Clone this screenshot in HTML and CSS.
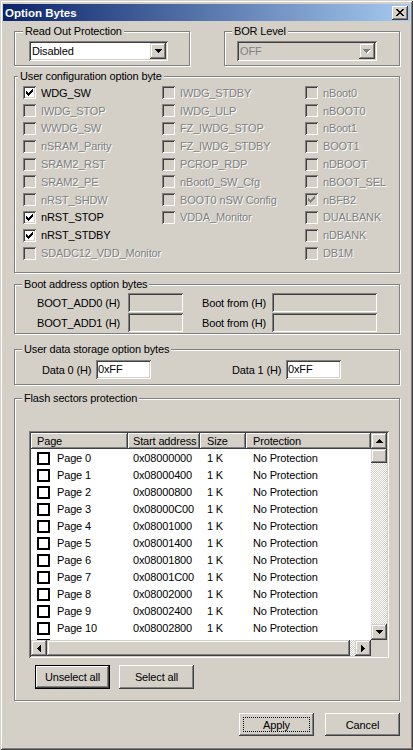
FILE: index.html
```html
<!DOCTYPE html>
<html>
<head>
<meta charset="utf-8">
<title>Option Bytes</title>
<link rel="stylesheet" href="styles.css">
</head>
<body>
<div class="window">
  <div class="titlebar">
    <span class="title">Option Bytes</span>
    <span class="close"><svg width="8" height="7" viewBox="0 0 8 7" shape-rendering="crispEdges"><path d="M0 0h2v1H0z M6 0h2v1H6z M1 1h2v1H1z M5 1h2v1H5z M2 2h4v1H2z M3 3h2v1H3z M2 4h4v1H2z M1 5h2v1H1z M5 5h2v1H5z M0 6h2v1H0z M6 6h2v1H6z" fill="#000"/></svg></span>
  </div>
  <div class="client">
    <div class="toprow">
      <div class="group g-rop">
        <span class="glabel gl-rop">Read Out Protection</span>
        <div class="combo">
          <span class="combo-text">Disabled</span>
          <span class="sbtn"><svg width="7" height="4" viewBox="0 0 7 4" shape-rendering="crispEdges"><path d="M0 0h7v1H0z M1 1h5v1H1z M2 2h3v1H2z M3 3h1v1H3z" fill="#000"/></svg></span>
        </div>
      </div>
      <div class="group g-bor">
        <span class="glabel">BOR Level</span>
        <div class="combo combo-dis">
          <span class="combo-text">OFF</span>
          <span class="sbtn"><svg width="8" height="5" viewBox="0 0 8 5" shape-rendering="crispEdges"><path d="M1 1h7v1H1z M2 2h5v1H2z M3 3h3v1H3z M4 4h1v1H4z" fill="#fff"/><path d="M0 0h7v1H0z M1 1h5v1H1z M2 2h3v1H2z M3 3h1v1H3z" fill="#808080"/></svg></span>
        </div>
      </div>
    </div>

    <div class="group g-user">
      <span class="glabel gl-user">User configuration option byte</span>
      <div class="cbcols">
        <div class="cbcol col1">
          <div class="cb"><span class="box"><svg class="chk" width="7" height="7" viewBox="0 0 7 7" shape-rendering="crispEdges"><path d="M6 0h1v1H6z M5 1h2v1H5z M0 2h1v1H0z M4 2h3v1H4z M0 3h2v1H0z M3 3h3v1H3z M0 4h5v1H0z M1 5h3v1H1z M2 6h1v1H2z"/></svg></span><span class="lbl">WDG_SW</span></div>
          <div class="cb dis"><span class="box"></span><span class="lbl">IWDG_STOP</span></div>
          <div class="cb dis"><span class="box"></span><span class="lbl">WWDG_SW</span></div>
          <div class="cb dis"><span class="box"></span><span class="lbl">nSRAM_Parity</span></div>
          <div class="cb dis"><span class="box"></span><span class="lbl">SRAM2_RST</span></div>
          <div class="cb dis"><span class="box"></span><span class="lbl">SRAM2_PE</span></div>
          <div class="cb dis"><span class="box"></span><span class="lbl">nRST_SHDW</span></div>
          <div class="cb"><span class="box"><svg class="chk" width="7" height="7" viewBox="0 0 7 7" shape-rendering="crispEdges"><path d="M6 0h1v1H6z M5 1h2v1H5z M0 2h1v1H0z M4 2h3v1H4z M0 3h2v1H0z M3 3h3v1H3z M0 4h5v1H0z M1 5h3v1H1z M2 6h1v1H2z"/></svg></span><span class="lbl">nRST_STOP</span></div>
          <div class="cb"><span class="box"><svg class="chk" width="7" height="7" viewBox="0 0 7 7" shape-rendering="crispEdges"><path d="M6 0h1v1H6z M5 1h2v1H5z M0 2h1v1H0z M4 2h3v1H4z M0 3h2v1H0z M3 3h3v1H3z M0 4h5v1H0z M1 5h3v1H1z M2 6h1v1H2z"/></svg></span><span class="lbl">nRST_STDBY</span></div>
          <div class="cb dis"><span class="box"></span><span class="lbl">SDADC12_VDD_Monitor</span></div>
        </div>
        <div class="cbcol col2">
          <div class="cb dis"><span class="box"></span><span class="lbl">IWDG_STDBY</span></div>
          <div class="cb dis"><span class="box"></span><span class="lbl">IWDG_ULP</span></div>
          <div class="cb dis"><span class="box"></span><span class="lbl">FZ_IWDG_STOP</span></div>
          <div class="cb dis"><span class="box"></span><span class="lbl">FZ_IWDG_STDBY</span></div>
          <div class="cb dis"><span class="box"></span><span class="lbl">PCROP_RDP</span></div>
          <div class="cb dis"><span class="box"></span><span class="lbl">nBoot0_SW_Cfg</span></div>
          <div class="cb dis"><span class="box"></span><span class="lbl">BOOT0 nSW Config</span></div>
          <div class="cb dis"><span class="box"></span><span class="lbl">VDDA_Monitor</span></div>
        </div>
        <div class="cbcol col3">
          <div class="cb dis"><span class="box"></span><span class="lbl">nBoot0</span></div>
          <div class="cb dis"><span class="box"></span><span class="lbl">nBOOT0</span></div>
          <div class="cb dis"><span class="box"></span><span class="lbl">nBoot1</span></div>
          <div class="cb dis"><span class="box"></span><span class="lbl">BOOT1</span></div>
          <div class="cb dis"><span class="box"></span><span class="lbl">nDBOOT</span></div>
          <div class="cb dis"><span class="box"></span><span class="lbl">nBOOT_SEL</span></div>
          <div class="cb dis"><span class="box"><svg class="chk" width="7" height="7" viewBox="0 0 7 7" shape-rendering="crispEdges"><path d="M6 0h1v1H6z M5 1h2v1H5z M0 2h1v1H0z M4 2h3v1H4z M0 3h2v1H0z M3 3h3v1H3z M0 4h5v1H0z M1 5h3v1H1z M2 6h1v1H2z"/></svg></span><span class="lbl">nBFB2</span></div>
          <div class="cb dis"><span class="box"></span><span class="lbl">DUALBANK</span></div>
          <div class="cb dis"><span class="box"></span><span class="lbl">nDBANK</span></div>
          <div class="cb dis"><span class="box"></span><span class="lbl">DB1M</span></div>
        </div>
      </div>
    </div>

    <div class="group g-boot">
      <span class="glabel">Boot address option bytes</span>
      <div class="frow">
        <span class="flbl w91">BOOT_ADD0 (H)</span><span class="edit dis w55"></span>
        <span class="flbl w70 ml19">Boot from (H)</span><span class="edit dis w105"></span>
      </div>
      <div class="frow">
        <span class="flbl w91">BOOT_ADD1 (H)</span><span class="edit dis w55"></span>
        <span class="flbl w70 ml19">Boot from (H)</span><span class="edit dis w105"></span>
      </div>
    </div>

    <div class="group g-data">
      <span class="glabel">User data storage option bytes</span>
      <div class="frow">
        <span class="flbl w54">Data 0 (H)</span><span class="edit w55">0xFF</span>
        <span class="flbl w54 ml81">Data 1 (H)</span><span class="edit w55">0xFF</span>
      </div>
    </div>

    <div class="group g-flash">
      <span class="glabel">Flash sectors protection</span>
      <div class="list">
        <div class="lv-main">
          <div class="lv-head">
            <div class="hc c1">Page</div>
            <div class="hc c2">Start address</div>
            <div class="hc c3">Size</div>
            <div class="hc c4">Protection</div>
          </div>
          <div class="lv-row"><div class="c1"><span class="rbox"></span>Page 0</div><div class="c2">0x08000000</div><div class="c3">1 K</div><div class="c4">No Protection</div></div>
          <div class="lv-row"><div class="c1"><span class="rbox"></span>Page 1</div><div class="c2">0x08000400</div><div class="c3">1 K</div><div class="c4">No Protection</div></div>
          <div class="lv-row"><div class="c1"><span class="rbox"></span>Page 2</div><div class="c2">0x08000800</div><div class="c3">1 K</div><div class="c4">No Protection</div></div>
          <div class="lv-row"><div class="c1"><span class="rbox"></span>Page 3</div><div class="c2">0x08000C00</div><div class="c3">1 K</div><div class="c4">No Protection</div></div>
          <div class="lv-row"><div class="c1"><span class="rbox"></span>Page 4</div><div class="c2">0x08001000</div><div class="c3">1 K</div><div class="c4">No Protection</div></div>
          <div class="lv-row"><div class="c1"><span class="rbox"></span>Page 5</div><div class="c2">0x08001400</div><div class="c3">1 K</div><div class="c4">No Protection</div></div>
          <div class="lv-row"><div class="c1"><span class="rbox"></span>Page 6</div><div class="c2">0x08001800</div><div class="c3">1 K</div><div class="c4">No Protection</div></div>
          <div class="lv-row"><div class="c1"><span class="rbox"></span>Page 7</div><div class="c2">0x08001C00</div><div class="c3">1 K</div><div class="c4">No Protection</div></div>
          <div class="lv-row"><div class="c1"><span class="rbox"></span>Page 8</div><div class="c2">0x08002000</div><div class="c3">1 K</div><div class="c4">No Protection</div></div>
          <div class="lv-row"><div class="c1"><span class="rbox"></span>Page 9</div><div class="c2">0x08002400</div><div class="c3">1 K</div><div class="c4">No Protection</div></div>
          <div class="lv-row"><div class="c1"><span class="rbox"></span>Page 10</div><div class="c2">0x08002800</div><div class="c3">1 K</div><div class="c4">No Protection</div></div>
          <div class="lv-row"><div class="c1"><span class="rbox"></span>Page 11</div><div class="c2">0x08002C00</div><div class="c3">1 K</div><div class="c4">No Protection</div></div>
        </div>
        <div class="vscroll">
          <span class="sbtn"><svg width="7" height="4" viewBox="0 0 7 4" shape-rendering="crispEdges"><path d="M3 0h1v1H3z M2 1h3v1H2z M1 2h5v1H1z M0 3h7v1H0z" fill="#000"/></svg></span>
          <span class="sthumb vthumb"></span>
          <span class="strack"></span>
          <span class="sbtn"><svg width="7" height="4" viewBox="0 0 7 4" shape-rendering="crispEdges"><path d="M0 0h7v1H0z M1 1h5v1H1z M2 2h3v1H2z M3 3h1v1H3z" fill="#000"/></svg></span>
        </div>
        <div class="hscroll">
          <span class="sbtn"><svg width="4" height="7" viewBox="0 0 4 7" shape-rendering="crispEdges"><path d="M3 0h1v7H3z M2 1h1v5H2z M1 2h1v3H1z M0 3h1v1H0z" fill="#000"/></svg></span>
          <span class="sthumb hthumb"></span>
          <span class="strack"></span>
          <span class="sbtn"><svg width="4" height="7" viewBox="0 0 4 7" shape-rendering="crispEdges"><path d="M0 0h1v7H0z M1 1h1v5H1z M2 2h1v3H2z M3 3h1v1H3z" fill="#000"/></svg></span>
        </div>
        <div class="corner"></div>
      </div>
      <div class="lbtns">
        <span class="btn default">Unselect all</span>
        <span class="btn">Select all</span>
      </div>
    </div>

    <div class="dlg-btns">
      <span class="btn focus"><span class="focus-rect">Apply</span></span>
      <span class="btn">Cancel</span>
    </div>
  </div>
</div>
</body>
</html>
```

FILE: styles.css
```css
* { box-sizing: border-box; }
html, body { margin: 0; padding: 0; }
body {
  background: #d4d0c8;
  font-family: "Liberation Sans", Arial, sans-serif;
  font-size: 11px;
  letter-spacing: -0.15px;
  color: #000;
}
.window {
  width: 413px;
  height: 750px;
  padding: 4px 3px 3px 3px;
  background: #d4d0c8;
  box-shadow: inset 1px 1px #d4d0c8, inset -1px -1px #404040, inset 2px 2px #fff, inset -2px -2px #808080;
  overflow: hidden;
}
.titlebar {
  height: 17px;
  display: flex;
  align-items: center;
  justify-content: space-between;
  background: linear-gradient(to right, #0a246a, #a6caf0);
  padding: 0 2px 0 2px;
}
.title { color: #fff; font-weight: bold; font-size: 11.5px; letter-spacing: 0; }
.close {
  width: 16px;
  height: 14px;
  background: #d4d0c8;
  box-shadow: inset -1px -1px #404040, inset 1px 1px #fff, inset -2px -2px #808080;
  display: flex;
  align-items: center;
  justify-content: center;
  padding-bottom: 1px;
}
.client { padding: 10px 0 0 11px; }

/* group boxes */
.group {
  position: relative;
  border: 1px solid #808080;
  box-shadow: inset 1px 1px #fff, 1px 1px #fff;
}
.glabel {
  position: absolute;
  top: -7px;
  left: 7px;
  padding: 0 2px;
  background: #d4d0c8;
  line-height: 13px;
  white-space: nowrap;
}
.gl-rop { left: 8px; }
.gl-user { left: 3px; }

.toprow { display: flex; gap: 34px; }
.g-rop { width: 176px; height: 35px; padding: 9px 0 0 14px; }
.g-bor { width: 176px; height: 35px; padding: 9px 0 0 12px; }
.g-bor .combo { width: 140px; }

/* combo */
.combo {
  width: 139px;
  height: 20px;
  padding: 2px;
  display: flex;
  background: #fff;
  box-shadow: inset 1px 1px #808080, inset -1px -1px #fff, inset 2px 2px #404040, inset -2px -2px #d4d0c8;
}
.combo-text { flex: 1; line-height: 16px; padding-left: 1px; }
.combo-dis { background: #d4d0c8; }
.combo-dis .combo-text { color: #808080; }

/* scroll-style buttons */
.sbtn {
  flex: none;
  width: 16px;
  height: 16px;
  display: flex;
  align-items: center;
  justify-content: center;
  background: #d4d0c8;
  box-shadow: inset -1px -1px #404040, inset 1px 1px #d4d0c8, inset -2px -2px #808080, inset 2px 2px #fff;
}

/* user configuration */
.g-user { margin-top: 10px; width: 386px; height: 197px; padding: 7px 0 0 8px; }
.cbcols { display: flex; }
.col1 { width: 139px; }
.col2 { width: 143px; }
.col3 { flex: 1; }
.cb { height: 17.8px; display: flex; align-items: center; gap: 5px; white-space: nowrap; }
.box {
  flex: none;
  width: 13px;
  height: 13px;
  padding: 3px;
  display: flex;
  background: #fff;
  box-shadow: inset 1px 1px #808080, inset -1px -1px #fff, inset 2px 2px #404040, inset -2px -2px #d4d0c8;
}
.chk { fill: #000; display: block; }
.cb.dis .box { background: #d4d0c8; }
.cb.dis .chk { fill: #808080; }
.cb.dis .lbl { color: #808080; text-shadow: 1px 1px 0 #fff; }

/* field rows */
.frow { display: flex; align-items: center; height: 19px; }
.flbl { flex: none; white-space: nowrap; }
.edit {
  flex: none;
  height: 19px;
  padding: 2px 2px 0 2px;
  line-height: 15px;
  background: #fff;
  box-shadow: inset 1px 1px #808080, inset -1px -1px #fff, inset 2px 2px #404040, inset -2px -2px #d4d0c8;
}
.edit.dis { background: #d4d0c8; }
.w91 { width: 91px; }
.w70 { width: 70px; }
.w54 { width: 54px; }
.w55 { width: 55px; }
.w105 { width: 105px; }
.ml19 { margin-left: 19px; }
.ml81 { margin-left: 81px; }

.g-boot { margin-top: 11px; width: 386px; height: 50px; padding: 8px 0 0 22px; display: flex; flex-direction: column; gap: 1px; }
.g-data { margin-top: 15px; width: 386px; height: 36px; padding: 10px 0 0 27px; }

/* flash */
.g-flash { margin-top: 13px; width: 386px; height: 303px; padding: 32px 0 0 14px; }
.list {
  width: 360px;
  height: 227px;
  padding: 2px;
  background: #fff;
  box-shadow: inset 1px 1px #808080, inset -1px -1px #fff, inset 2px 2px #404040, inset -2px -2px #d4d0c8;
  display: grid;
  grid-template-columns: 340px 16px;
  grid-template-rows: 207px 16px;
}
.lv-main { overflow: hidden; }
.lv-head, .lv-row { display: flex; }
.c1 { width: 97px; padding-left: 6px; }
.c2 { width: 72px; padding-left: 5px; }
.c3 { width: 46px; padding-left: 7px; }
.c4 { width: 125px; padding-left: 7px; }
.hc {
  flex: none;
  height: 16px;
  line-height: 16px;
  white-space: nowrap;
  overflow: hidden;
  background: #d4d0c8;
  box-shadow: inset -1px -1px #404040, inset 1px 1px #fff, inset -2px -2px #808080;
}
.lv-row > div {
  flex: none;
  height: 17px;
  display: flex;
  align-items: center;
  white-space: nowrap;
}
.rbox {
  flex: none;
  width: 13px;
  height: 13px;
  border: 2px solid #000;
  background: #fff;
  margin: 2px 7px 0 0;
}
.vscroll { display: flex; flex-direction: column; }
.hscroll { display: flex; }
.sthumb {
  flex: none;
  background: #d4d0c8;
  box-shadow: inset -1px -1px #404040, inset 1px 1px #d4d0c8, inset -2px -2px #808080, inset 2px 2px #fff;
}
.vthumb { width: 16px; height: 14px; }
.hthumb { width: 303px; height: 16px; }
.strack {
  flex: 1;
  background-image: conic-gradient(#d4d0c8 25%, #fff 0 50%, #d4d0c8 0 75%, #fff 0);
  background-size: 2px 2px;
}
.corner { background: #d4d0c8; }

/* buttons */
.btn {
  flex: none;
  width: 75px;
  height: 24px;
  display: flex;
  align-items: center;
  justify-content: center;
  background: #d4d0c8;
  box-shadow: inset -1px -1px #404040, inset 1px 1px #fff, inset -2px -2px #808080;
  white-space: nowrap;
}
.btn.default { border: 1px solid #000; }
.lbtns { display: flex; gap: 9px; margin: 7px 0 0 6px; }
.dlg-btns { display: flex; justify-content: flex-end; gap: 11px; width: 386px; margin-top: 12px; }
.dlg-btns .btn { height: 23px; }
.btn.focus { padding: 4px; }
.focus-rect {
  flex: 1;
  align-self: stretch;
  display: flex;
  align-items: center;
  justify-content: center;
  border: 1px dotted #000;
}
```
